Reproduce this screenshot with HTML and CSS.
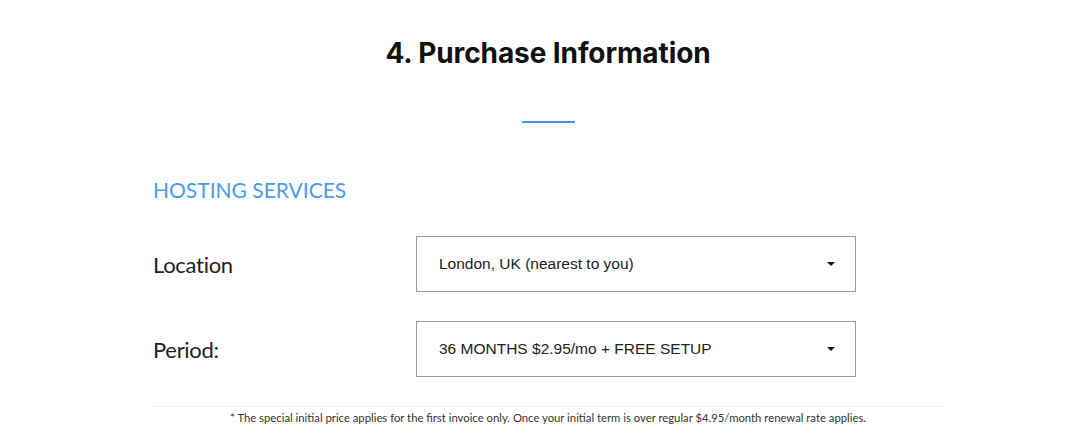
FILE: index.html
```html
<!DOCTYPE html>
<html>
<head>
<meta charset="utf-8">
<link rel="stylesheet" href="styles.css">
</head>
<body>
<div class="page">
  <h1 class="title">4. Purchase Information</h1>
  <div class="accent"></div>
  <h2 class="section">HOSTING SERVICES</h2>
  <div class="row">
    <div class="label">Location</div>
    <div class="select">
      <span>London, UK (nearest to you)</span>
      <span class="caret"></span>
    </div>
  </div>
  <div class="row">
    <div class="label">Period:</div>
    <div class="select">
      <span>36 MONTHS $2.95/mo + FREE SETUP</span>
      <span class="caret"></span>
    </div>
  </div>
  <div class="note">* The special initial price applies for the first invoice only. Once your initial term is over regular $4.95/month renewal rate applies.</div>
</div>
</body>
</html>
```
FILE: styles.css
```css
html, body {
  margin: 0;
  padding: 0;
  background: #ffffff;
}
.page {
  width: 790px;
  margin-left: 153px;
  display: flex;
  flex-direction: column;
}
.title {
  margin: 36px 0 0 0;
  text-align: center;
  font-family: "Inter", "Noto Sans", sans-serif;
  font-weight: 700;
  font-size: 28px;
  line-height: 34px;
  color: #111;
  letter-spacing: -0.1px;
}
.accent {
  align-self: center;
  width: 53px;
  height: 2px;
  background: #3d95ea;
  margin-top: 51px;
}
.section {
  margin: 53px 0 0 0;
  font-family: "Lato", sans-serif;
  font-weight: 400;
  font-size: 21px;
  line-height: 28px;
  color: #4a9be8;
}
.row {
  display: flex;
  align-items: center;
  margin-top: 32px;
}
.row + .row {
  margin-top: 29px;
}
.label {
  width: 263px;
  font-family: "Lato", sans-serif;
  font-size: 22px;
  color: #222;
  letter-spacing: -0.3px;
}
.select {
  box-sizing: border-box;
  width: 440px;
  height: 56px;
  border: 1px solid #9a9a9a;
  display: flex;
  align-items: center;
  justify-content: space-between;
  padding: 0 20px 0 22px;
  font-family: "Liberation Sans", Arial, sans-serif;
  font-size: 15.5px;
  color: #222;
}
.caret {
  width: 0;
  height: 0;
  border-left: 4px solid transparent;
  border-right: 4px solid transparent;
  border-top: 4px solid #111;
}
.note {
  margin-top: 29px;
  border-top: 1px solid #ececec;
  padding-top: 4px;
  text-align: center;
  font-family: "Lato", sans-serif;
  font-size: 11.3px;
  color: #333;
}
```
